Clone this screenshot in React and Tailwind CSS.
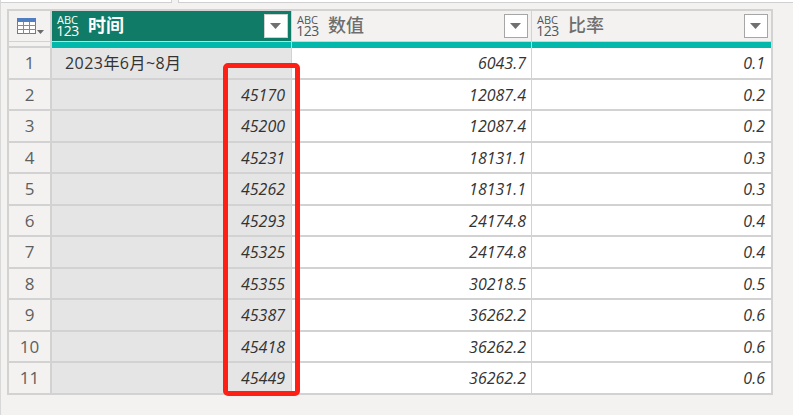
import React from "react";

const rows = [
  ["1", "", "6043.7", "0.1"],
  ["2", "45170", "12087.4", "0.2"],
  ["3", "45200", "12087.4", "0.2"],
  ["4", "45231", "18131.1", "0.3"],
  ["5", "45262", "18131.1", "0.3"],
  ["6", "45293", "24174.8", "0.4"],
  ["7", "45325", "24174.8", "0.4"],
  ["8", "45355", "30218.5", "0.5"],
  ["9", "45387", "36262.2", "0.6"],
  ["10", "45418", "36262.2", "0.6"],
  ["11", "45449", "36262.2", "0.6"],
];

const font = "font-['Open_Sans','Noto_Sans_CJK_SC',sans-serif]";
const cols = "grid grid-cols-[42px_239px_239px_239px] gap-x-[1px]";

function TypeBadge({ active }) {
  return (
    <div className={`flex flex-col items-center w-[23px] ${active ? "text-white" : "text-[#555]"}`}>
      <span className="text-[11px] leading-[10px]">ABC</span>
      <span className="text-[14px] leading-[12px] tracking-[-0.5px]">123</span>
    </div>
  );
}

function FilterButton({ active }) {
  return (
    <div className={`ml-auto w-6 h-6 bg-white border flex items-center justify-center ${active ? "border-[#d0d0d0]" : "border-[#a6a6a6]"}`}>
      <svg width="12" height="6" viewBox="0 0 12 6">
        <path d="M0 0h11L5.500 6z" fill="#707070" />
      </svg>
    </div>
  );
}

function HeaderCell({ label, active }) {
  return (
    <div className={`h-[30px] flex items-center pl-[4px] pr-[3px] ${active ? "bg-[#107c67]" : "bg-[#f3f2f1]"}`}>
      <TypeBadge active={active} />
      <span className={`ml-[9px] mb-[2px] text-[18px] ${active ? "text-white font-bold" : "text-[#6e6e6e] font-medium"}`}>{label}</span>
      <FilterButton active={active} />
    </div>
  );
}

function TableIcon() {
  return (
    <svg width="27" height="16" viewBox="0 0 27 16">
      <rect x="0" y="0" width="19" height="4" fill="#4f7fc0" />
      <rect x="0.5" y="3.500" width="18" height="12" fill="#fff" stroke="#7a7a7a" />
      <path d="M0 7.500h19M0 11.500h19M6.500 4v12M12.500 4v12" stroke="#8a8a8a" strokeWidth="1" />
      <path d="M20 12h7l-3.500 4z" fill="#6b6b6b" />
    </svg>
  );
}

export default function App() {
  return (
    <div className={`relative w-[793px] h-[415px] overflow-hidden bg-[#f3f2f1] border-l border-[#d8d8d8] ${font}`}>
      {/* panes above the grid */}
      <div className="flex h-[3px] gap-[6px]">
        <div className="w-[171px] bg-white border-r border-b border-[#d0d0d0]"></div>
        <div className="w-[615px] bg-white border-l border-b border-[#d0d0d0]"></div>
      </div>

      {/* data grid */}
      <div className="ml-[6px] mt-[6px] w-[766px] bg-[#d2d2d2] p-[2px]">
        <div className={`${cols} gap-y-[1px]`}>
          <div className="h-[30px] bg-[#f3f2f1] mr-[1px] flex items-center pl-[8px]">
            <TableIcon />
          </div>
          <HeaderCell label="时间" active />
          <HeaderCell label="数值" />
          <HeaderCell label="比率" />

          <div className="h-[6px] bg-[#f3f2f1] mr-[1px] border-b-2 border-[#d2d2d2]"></div>
          <div className="h-[6px] bg-[#01b8aa]"></div>
          <div className="h-[6px] bg-[#01b8aa]"></div>
          <div className="h-[6px] bg-[#01b8aa]"></div>
        </div>

        <div className={`${cols} gap-y-[2px]`}>
          {rows.map((r, i) => (
            <React.Fragment key={r[0]}>
              <div className={`${i % 2 ? "h-[29px]" : "h-[30px]"} mr-[1px] bg-[#f3f2f1] flex items-center justify-center text-[17px] text-[#5f5f5f]`}>{r[0]}</div>
              <div className={`bg-[#e5e5e5] flex items-center text-[16px] text-[#333] ${i === 0 ? "pl-[13px] tracking-[0.45px]" : "justify-end italic pr-[6px]"}`}>
                {i === 0 ? "2023年6月~8月" : r[1]}
              </div>
              <div className="bg-white flex items-center justify-end pr-[5px] italic text-[16px] text-[#333]">{r[2]}</div>
              <div className="bg-white flex items-center justify-end pr-[6px] italic text-[16px] text-[#333]">{r[3]}</div>
            </React.Fragment>
          ))}
        </div>
      </div>

      {/* red highlight drawn over the grid */}
      <div className="absolute left-[222px] top-[63px] w-[77px] h-[333px] border-[5px] border-[#ff2015] rounded-[5px]"></div>
    </div>
  );
}
